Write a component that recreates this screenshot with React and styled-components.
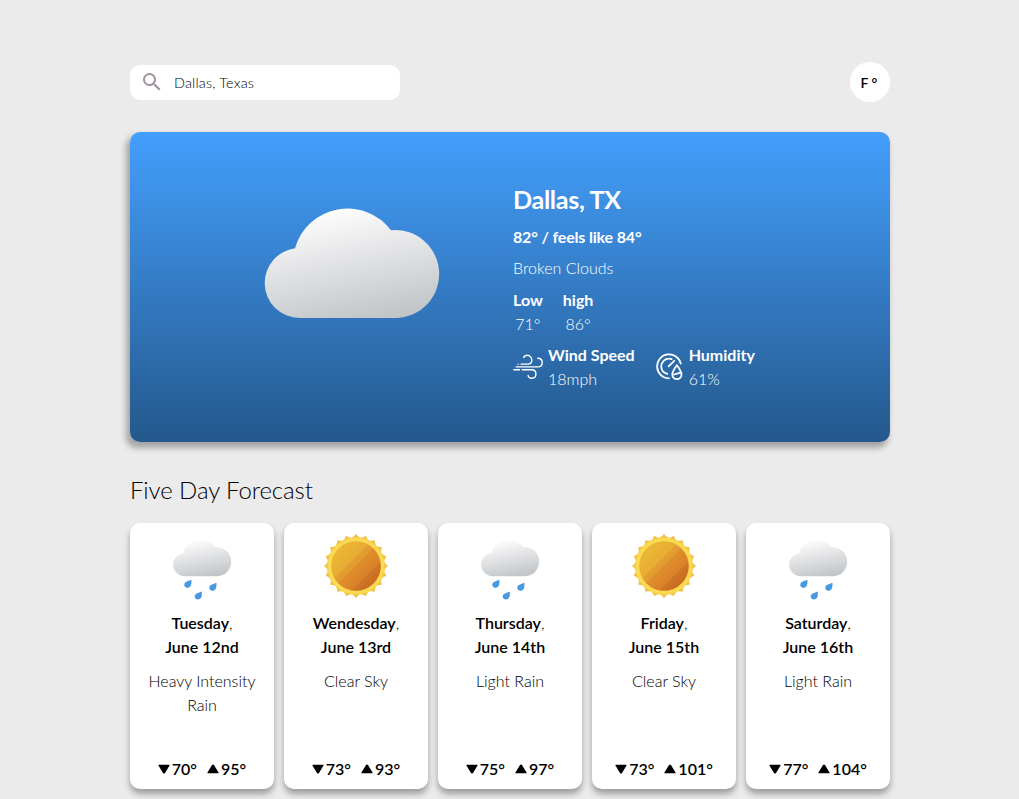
import React from "react";
import styled, { createGlobalStyle } from "styled-components";

const GlobalStyle = createGlobalStyle`
  * { box-sizing: border-box; }
  html, body { margin: 0; height: 100%; overflow: hidden; }
  body {
    background: #ebebeb;
    color: #000;
    font-family: Lato, "Liberation Sans", sans-serif;
    font-size: 16px;
    font-weight: 300;
    line-height: 24px;
  }
  p, h1, h2, h3 { margin: 0; }
`;

const Page = styled.main`
  width: 760px;
  margin-left: 130px;
  padding-top: 62px;
`;

const Header = styled.header`
  display: flex;
  align-items: center;
  justify-content: space-between;
  height: 40px;
  margin-bottom: 30px;
`;

const SearchBox = styled.label`
  display: flex;
  align-items: center;
  width: 270px;
  height: 35px;
  margin-top: 1px;
  padding-left: 10px;
  background: #fff;
  border-radius: 10px;
`;

const SearchIcon = styled.svg`
  width: 24px;
  height: 24px;
  margin-top: -2px;
  fill: #9c939c;
`;

const SearchText = styled.span`
  margin-left: 10px;
  font-size: 14.4px;
  letter-spacing: 0.2px;
`;

const UnitButton = styled.button`
  width: 40px;
  height: 40px;
  padding: 1px 2px 0 0;
  border: 0;
  border-radius: 50%;
  background: #fff;
  color: #000;
  font-family: inherit;
  font-size: 14px;
  font-weight: 600;
`;

const Current = styled.section`
  display: flex;
  height: 310px;
  border-radius: 10px;
  background: linear-gradient(#449ffd, #24588c);
  box-shadow: -3px 5px 6px 1px rgba(0, 0, 0, 0.3);
  color: #fff;
`;

const CurrentPicture = styled.div`
  width: 383px;
  padding: 76px 0 0 134px;

  svg { display: block; overflow: visible; }
`;

const Details = styled.div`
  padding-top: 52px;
`;

const City = styled.h1`
  font-size: 25.2px;
  letter-spacing: -0.35px;
  line-height: 30px;
  font-weight: 700;
  margin-bottom: 11px;
`;

const FeelsLike = styled.p`
  font-weight: 700;
  letter-spacing: -0.17px;
  margin-bottom: 7px;
`;

const Condition = styled.p`
  margin-bottom: 8px;
`;

const Range = styled.div`
  display: flex;
  gap: 20px;
  margin-bottom: 7px;
  text-align: center;
`;

const Metrics = styled.div`
  display: flex;
  gap: 21px;
`;

const Metric = styled.div`
  display: flex;
  align-items: center;
  gap: 5px;
`;

const MetricIcon = styled.svg`
  width: ${(p) => p.$width}px;
  height: 30px;
  margin-bottom: 2px;
  fill: none;
  stroke: #fff;
  stroke-linecap: round;
  stroke-linejoin: round;
`;

const Label = styled.div`
  font-weight: 700;
`;

const ForecastTitle = styled.h2`
  margin: 33px 0 19px;
  font-size: 24px;
  line-height: 29px;
  font-weight: 300;
  letter-spacing: -0.1px;
`;

const Days = styled.section`
  display: grid;
  grid-template-columns: repeat(5, 144px);
  gap: 10px;
`;

const DayCard = styled.article`
  display: flex;
  flex-direction: column;
  align-items: center;
  height: 266px;
  padding: 8px 10px;
  border-radius: 10px;
  background: #fff;
  box-shadow: 0 5px 6px rgba(0, 0, 0, 0.33);
  text-align: center;
`;

const DayIcon = styled.svg`
  flex: none;
  width: 70px;
  height: 70px;
  margin-bottom: 10px;
`;

const DayDate = styled.h3`
  font-size: 16px;
  font-weight: 300;
  margin-bottom: 10px;

  b { font-weight: 600; }
`;

const Temps = styled.div`
  display: flex;
  gap: 10px;
  margin-top: auto;
  font-weight: 600;
`;

const Temp = styled.span`
  display: flex;
  align-items: center;
  gap: 2px;
`;

const Arrow = styled.svg`
  width: 12px;
  height: 10px;
  fill: #000;
`;

const CLOUD =
  "M35.7 110 A35 35 0 0 1 .7 75 A35 35 0 0 1 31 40.3 A54.5 54.5 0 0 1 127 22.2 A44 44 0 1 1 131.5 110 Z";

function CloudGradient({ id }) {
  return (
    <linearGradient id={id} gradientUnits="userSpaceOnUse" x1="76" y1="3" x2="98" y2="112">
      <stop offset="0" stopColor="#fcfcfc" />
      <stop offset="0.5" stopColor="#dfe0e2" />
      <stop offset="1" stopColor="#c2c6c8" />
    </linearGradient>
  );
}

function RainIcon({ id }) {
  const drop = "M3.8 -4.2 C4 -1 3.9 1.6 2.2 3.1 C.2 4.7 -3.1 3.8 -3.3 1.1 C-3.5 -2.4 .4 -2.4 3.8 -4.2 Z";
  return (
    <DayIcon viewBox="0 0 70 70">
      <defs><CloudGradient id={id} /></defs>
      <path transform="translate(5.8 8.6) scale(0.3333)" d={CLOUD} fill={`url(#${id})`} />
      <g fill="#4799e0">
        <path transform="translate(20.6 53)" d={drop} />
        <path transform="translate(45.6 56)" d={drop} />
        <path transform="translate(31 64.6)" d={drop} />
      </g>
    </DayIcon>
  );
}

function sunRays() {
  const count = 20;
  let d = "";
  for (let i = 0; i < count; i += 1) {
    const at = (r, k) => {
      const a = ((i + k) / count) * Math.PI * 2 - Math.PI / 2;
      return `${(35 + r * Math.cos(a)).toFixed(2)} ${(35 + r * Math.sin(a)).toFixed(2)}`;
    };
    d += `${i ? "L" : "M"}${at(31.9, 0)} Q${at(29.2, 0.2)} ${at(28.6, 0.5)} Q${at(29.2, 0.8)} ${at(31.9, 1)} `;
  }
  return `${d}Z`;
}

function SunIcon({ id }) {
  return (
    <DayIcon viewBox="0 0 70 70">
      <defs>
        <linearGradient id={id} x1="0.15" y1="0.15" x2="0.85" y2="0.85">
          <stop offset="0" stopColor="#ebb735" />
          <stop offset="0.36" stopColor="#e8ac33" />
          <stop offset="0.37" stopColor="#e3a034" />
          <stop offset="0.49" stopColor="#e19a30" />
          <stop offset="0.5" stopColor="#de8d2a" />
          <stop offset="0.78" stopColor="#d8822a" />
          <stop offset="0.79" stopColor="#cf7627" />
          <stop offset="1" stopColor="#c96b20" />
        </linearGradient>
      </defs>
      <path d={sunRays()} fill="#f2bf42" />
      <circle cx="35" cy="35" r="28.6" fill="#fbda52" />
      <circle cx="35" cy="35" r="24.8" fill={`url(#${id})`} />
    </DayIcon>
  );
}

const days = [
  { day: "Tuesday", date: "June 12nd", text: "Heavy Intensity Rain", rain: true, low: 70, high: 95 },
  { day: "Wendesday", date: "June 13rd", text: "Clear Sky", low: 73, high: 93 },
  { day: "Thursday", date: "June 14th", text: "Light Rain", rain: true, low: 75, high: 97 },
  { day: "Friday", date: "June 15th", text: "Clear Sky", low: 73, high: 101 },
  { day: "Saturday", date: "June 16th", text: "Light Rain", rain: true, low: 77, high: 104 },
];

export default function App() {
  return (
    <>
      <GlobalStyle />
      <Page>
        <Header>
          <SearchBox>
            <SearchIcon viewBox="0 0 24 24">
              <path d="M15.5 14h-.79l-.28-.27A6.471 6.471 0 0 0 16 9.5 6.5 6.5 0 1 0 9.5 16c1.61 0 3.09-.59 4.23-1.57l.27.28v.79l5 4.99L20.49 19l-4.99-5zm-6 0C7.01 14 5 11.99 5 9.5S7.01 5 9.5 5 14 7.01 14 9.5 11.99 14 9.5 14z" />
            </SearchIcon>
            <SearchText>Dallas, Texas</SearchText>
          </SearchBox>
          <UnitButton>F °</UnitButton>
        </Header>

        <Current>
          <CurrentPicture>
            <svg width="176" height="110" viewBox="0 0 176 110">
              <defs><CloudGradient id="cloud-main" /></defs>
              <path d={CLOUD} fill="url(#cloud-main)" />
            </svg>
          </CurrentPicture>
          <Details>
            <City>Dallas, TX</City>
            <FeelsLike>82° / feels like 84°</FeelsLike>
            <Condition>Broken Clouds</Condition>
            <Range>
              <div><Label>Low</Label>71°</div>
              <div><Label>high</Label>86°</div>
            </Range>
            <Metrics>
              <Metric>
                <MetricIcon $width={30} viewBox="0 0 30 30" strokeWidth="1.4">
                  <path d="M8 13.1H14.5C17 13.1 18.8 11.5 18.8 9.2S17 4.2 14.4 4.2C12.4 4.2 11.2 5.2 10.7 6.5M5 13.1h.2" />
                  <path d="M3.2 15.9H25C27.5 15.9 29.2 14 29.2 11.5S27.4 7.2 24.7 7.2" />
                  <path d="M.8 18.8H6.5M9.3 18.8H18.8C21.3 18.8 22.9 20.7 22.9 23.1S21.2 27.3 18.7 27.3C16.8 27.3 15.4 26.2 15.1 24.5" />
                </MetricIcon>
                <div><Label>Wind Speed</Label>18mph</div>
              </Metric>
              <Metric>
                <MetricIcon $width={28} viewBox="0 0 28 30" strokeWidth="1.8">
                  <path d="M13 27.3A12 12 0 1 1 24.8 12.6" />
                  <path d="M11.3 22.8A8 8 0 0 1 5.2 15.2C5.4 11 8.9 7.7 13 7.7C14 7.7 14.8 7.8 15.6 8.1" />
                  <path d="M12.6 15.4L18.2 9.8" />
                  <path d="M20.9 14.2C18.5 17.5 16.3 20.5 16.3 23.6A4.6 4.6 0 0 0 25.5 23.6C25.5 20.5 23.3 17.5 20.9 14.2ZM18.2 23.5L23.6 21.8" />
                </MetricIcon>
                <div><Label>Humidity</Label>61%</div>
              </Metric>
            </Metrics>
          </Details>
        </Current>

        <ForecastTitle>Five Day Forecast</ForecastTitle>
        <Days>
          {days.map((d) => (
            <DayCard key={d.day}>
              {d.rain ? <RainIcon id={`cloud-${d.day}`} /> : <SunIcon id={`sun-${d.day}`} />}
              <DayDate><b>{d.day}</b>,<br /><b>{d.date}</b></DayDate>
              <p>{d.text}</p>
              <Temps>
                <Temp>
                  <Arrow viewBox="0 0 12 10"><path d="M1 .7H11Q12 .7 11.4 1.7L7 8.9Q6 10.2 5 8.9L.6 1.7Q0 .7 1 .7Z" /></Arrow>
                  {d.low}°
                </Temp>
                <Temp>
                  <Arrow viewBox="0 0 12 10"><path d="M1 9.3H11Q12 9.3 11.4 8.3L7 1.1Q6-.2 5 1.1L.6 8.3Q0 9.3 1 9.3Z" /></Arrow>
                  {d.high}°
                </Temp>
              </Temps>
            </DayCard>
          ))}
        </Days>
      </Page>
    </>
  );
}
